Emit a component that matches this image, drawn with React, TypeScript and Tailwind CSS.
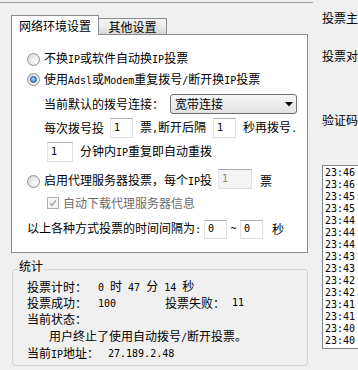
import React from 'react';

// Win7-style vote tool settings pane

const L = ({ children }: { children: React.ReactNode }) => (
  <span className="font-['DejaVu_Sans_Mono',monospace] text-[10px]">{children}</span>
);

const Radio = ({ checked }: { checked?: boolean }) => (
  <span className="flex h-[13px] w-[13px] shrink-0 items-center justify-center rounded-full border border-[#8e8f8f] bg-[radial-gradient(circle_at_70%_70%,#ffffff,#d2d2d2)]">
    {checked && (
      <span className="h-[7px] w-[7px] rounded-full border border-[#1b4f86] bg-[radial-gradient(circle_at_40%_35%,#9ad6ff,#2a77c0)]" />
    )}
  </span>
);

const Box = ({ value, w, h = 'h-[20px]', disabled }: { value: string; w: string; h?: string; disabled?: boolean }) => (
  <span
    className={`flex shrink-0 items-center border border-[#dbdfe6] border-l-[#e2e3ea] border-t-[#abadb3] px-[3px] font-['DejaVu_Sans_Mono',monospace] text-[10px] ${w} ${h} ${
      disabled ? 'bg-[#f4f4f4] text-[#8a8a8a]' : 'bg-white'
    }`}
  >
    {value}
  </span>
);

const times = ['23:46', '23:46', '23:45', '23:45', '23:44', '23:44', '23:44', '23:43', '23:43', '23:42', '23:42', '23:41', '23:41', '23:40', '23:40'];

export default function App() {
  return (
    <div className="flex h-[370px] w-[358px] overflow-hidden bg-[#f0f0f0] font-['Noto_Sans_CJK_SC',sans-serif] text-[12px] leading-[12px] text-black">
      {/* left column */}
      <div className="mt-[2px] flex w-[313px] shrink-0 flex-col border-t border-[#a0a0a0] pt-[12px]">
        {/* tabs */}
        <div className="ml-[11px] flex items-end">
          <div className="relative z-10 -mb-px flex h-[20px] w-[88px] items-center justify-center border border-b-0 border-[#898c95] bg-white">
            网络环境设置
          </div>
          <div className="-ml-px flex h-[16px] w-[69px] items-center justify-center border border-b-0 border-[#898c95] bg-gradient-to-b from-[#f4f4f4] via-[#ebebeb] to-[#d6d6d6]">
            其他设置
          </div>
        </div>

        {/* panel */}
        <div className="ml-[11px] flex h-[219px] w-[297px] flex-col border border-[#898c95] bg-white pl-[15px]">
          <div className="mt-[14px] flex h-[20px] items-center">
            <Radio />
            <span className="ml-[4px]">
              不换<L>IP</L>或软件自动换<L>IP</L>投票
            </span>
          </div>
          <div className="flex h-[21px] items-center">
            <Radio checked />
            <span className="ml-[4px]">
              使用<L>Adsl</L>或<L>Modem</L>重复拨号<L>/</L>断开换<L>IP</L>投票
            </span>
          </div>
          <div className="mt-[4px] flex h-[20px] items-center pl-[17px]">
            <span className="w-[126px] shrink-0">当前默认的拨号连接：</span>
            <div className="flex h-[20px] w-[127px] items-center justify-between rounded-[3px] border border-[#707070] bg-gradient-to-b from-[#f6f6f6] to-[#e2e2e2] pl-[4px] pr-[3px]">
              <span>宽带连接</span>
              <svg width="8" height="5" viewBox="0 0 8 5">
                <path d="M0 0h8L4 4.5z" fill="#000" />
              </svg>
            </div>
          </div>
          <div className="mt-[4px] flex h-[20px] items-center pl-[17px]">
            <span>每次拨号投</span>
            <span className="ml-[6px]">
              <Box value="1" w="w-[23px]" />
            </span>
            <span className="ml-[7px]">
              票<L>,</L>断开后隔
            </span>
            <span className="ml-[7px]">
              <Box value="1" w="w-[23px]" />
            </span>
            <span className="ml-[7px]">
              秒再拨号<L>.</L>
            </span>
          </div>
          <div className="mt-[4px] flex h-[20px] items-center pl-[20px]">
            <Box value="1" w="w-[26px]" />
            <span className="ml-[7px]">
              分钟内<L>IP</L>重复即自动重拨
            </span>
          </div>
          <div className="mt-[9px] flex h-[20px] items-center">
            <Radio />
            <span className="ml-[4px]">
              启用代理服务器投票，每个<L>IP</L>投
            </span>
            <span className="ml-[6px] -mt-[4px]">
              <Box value="1" w="w-[34px]" disabled />
            </span>
            <span className="ml-[8px]">票</span>
          </div>
          <div className="mt-[2px] flex h-[20px] items-center pl-[20px]">
            <span className="flex h-[12px] w-[12px] shrink-0 items-center justify-center border border-[#b1b1b1] bg-[#f4f4f4]">
              <svg width="8" height="8" viewBox="0 0 8 8">
                <path d="M1 4.2 3 6.3 7 1.4" stroke="#a8a8a8" strokeWidth="1.5" fill="none" />
              </svg>
            </span>
            <span className="ml-[4px] text-[#6d6d6d]">自动下载代理服务器信息</span>
          </div>
          <div className="mt-[6px] flex h-[20px] items-center">
            <span>
              以上各种方式投票的时间间隔为<L>:</L>
            </span>
            <span className="ml-[3px]">
              <Box value="0" w="w-[23px]" h="h-[19px]" />
            </span>
            <span className="flex w-[13px] justify-center">
              <L>~</L>
            </span>
            <Box value="0" w="w-[23px]" h="h-[19px]" />
            <span className="ml-[9px]">秒</span>
          </div>
        </div>

        {/* stats group */}
        <fieldset className="ml-[12px] mt-[7px] w-[296px] rounded-[3px] border border-[#d5d5d5] pb-[3px] pl-[14px] pt-[1px]">
          <legend className="-ml-[9px] h-[18px] px-[1px] leading-[12px]">统计</legend>
          <div className="flex h-[16px] items-center whitespace-pre">
            <span className="w-[71px] shrink-0">投票计时：</span>
            <span>
              <L>0 </L>时<L> 47 </L>分<L> 14 </L>秒
            </span>
          </div>
          <div className="flex h-[15px] items-center">
            <span className="w-[71px] shrink-0">投票成功：</span>
            <span className="w-[67px] shrink-0">
              <L>100</L>
            </span>
            <span className="w-[67px] shrink-0">投票失败：</span>
            <L>11</L>
          </div>
          <div className="flex h-[18px] items-center">当前状态：</div>
          <div className="flex h-[17px] items-center pl-[22px]">
            <span>
              用户终止了使用自动拨号<L>/</L>断开投票。
            </span>
          </div>
          <div className="flex h-[17px] items-center">
            <span className="w-[81px] shrink-0">
              当前<L>IP</L>地址：
            </span>
            <L>27.189.2.48</L>
          </div>
        </fieldset>
      </div>

      {/* right column */}
      <div className="flex w-[45px] shrink-0 flex-col pl-[9px]">
        <div className="mt-[12px] h-[12px] whitespace-nowrap">投票主</div>
        <div className="mt-[26px] h-[12px] whitespace-nowrap">投票对</div>
        <div className="mt-[52px] h-[12px] whitespace-nowrap">验证码</div>
        <div className="mt-[39px] flex h-[184px] w-[60px] shrink-0 flex-col border border-[#828790] bg-white pl-[2px] pt-px font-['DejaVu_Sans_Mono',monospace] text-[10px]">
          {times.map((t, i) => (
            <div key={i} className="h-[12px] leading-[12px]">
              {t}
            </div>
          ))}
        </div>
      </div>
    </div>
  );
}
